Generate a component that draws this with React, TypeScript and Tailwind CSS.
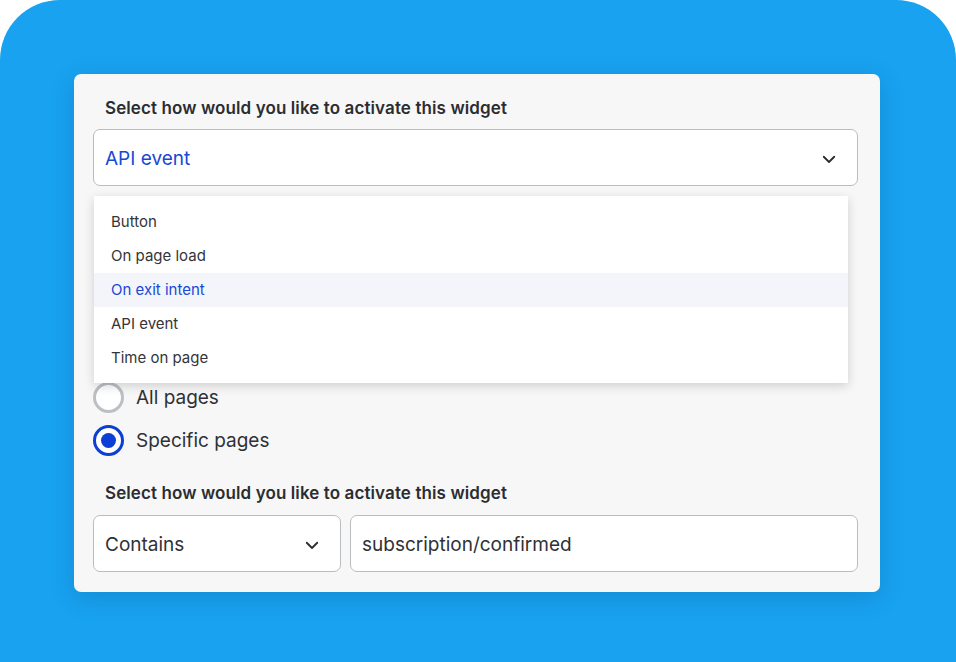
import React from "react";

const Chevron: React.FC<{ className?: string }> = ({ className }) => (
  <svg
    className={className}
    width="18"
    height="18"
    viewBox="0 0 24 24"
    fill="none"
    stroke="#2a2c30"
    strokeWidth="2.4"
    strokeLinecap="round"
    strokeLinejoin="round"
  >
    <path d="M5 9l7 7 7-7" />
  </svg>
);

const options = ["Button", "On page load", "On exit intent", "API event", "Time on page"];

const Radio: React.FC<{ checked?: boolean; label: string }> = ({ checked, label }) => (
  <div className="flex items-center gap-[12px]">
    {checked ? (
      <div className="flex h-[31px] w-[31px] items-center justify-center rounded-full border-[3px] border-[#0b3fd6] bg-white">
        <div className="h-[15px] w-[15px] rounded-full bg-[#0b3fd6]" />
      </div>
    ) : (
      <div className="h-[31px] w-[31px] rounded-full border-[3px] border-[#bcbfc4] bg-white" />
    )}
    <span className="pt-[2px] text-[19px] text-[#2f3135]">{label}</span>
  </div>
);

export default function App() {
  return (
    <div
      className="h-[662px] w-[956px] overflow-hidden bg-white"
      style={{ fontFamily: "Inter, 'Noto Sans', sans-serif" }}
    >
      <div className="h-full rounded-t-[60px] bg-[#18a2f0] px-[74px] pt-[74px]">
        <div className="relative w-[806px] rounded-[7px] bg-[#f7f7f7] pb-[20px] pl-[19px] pr-[22px] pt-[22px] shadow-[0_6px_24px_rgba(0,40,90,0.18)]">
          <div className="mb-[9px] px-[12px] text-[17px] font-semibold leading-6 tracking-[0.1px] text-[#2b2d31]">
            Select how would you like to activate this widget
          </div>
          <div className="flex h-[57px] items-center justify-between rounded-[7px] border border-[#b9bcc1] bg-white pl-[11px] pr-[19px] pt-[3px]">
            <span className="text-[19px] text-[#1848d4]">API event</span>
            <Chevron />
          </div>

          <div className="absolute left-[20px] top-[122px] z-10 w-[754px] bg-white pb-[8px] pt-[9px] shadow-[0_3px_10px_rgba(0,0,0,0.16)]">
            {options.map((o) => (
              <div
                key={o}
                className={
                  o === "On exit intent"
                    ? "flex h-[34px] items-center bg-[#f3f5fb] px-[17px] text-[15px] text-[#1848d4]"
                    : "flex h-[34px] items-center px-[17px] text-[15px] text-[#333539]"
                }
              >
                {o}
              </div>
            ))}
          </div>

          <div className="mt-[196px] flex flex-col gap-[12px]">
            <Radio label="All pages" />
            <Radio checked label="Specific pages" />
          </div>

          <div className="mb-[10px] mt-[25px] px-[12px] text-[17px] font-semibold leading-6 tracking-[0.1px] text-[#2b2d31]">
            Select how would you like to activate this widget
          </div>
          <div className="flex gap-[9px]">
            <div className="flex h-[57px] w-[248px] items-center justify-between rounded-[7px] border border-[#b9bcc1] bg-white pl-[11px] pr-[19px] pt-[3px]">
              <span className="text-[19px] text-[#2f3135]">Contains</span>
              <Chevron />
            </div>
            <div className="flex h-[57px] flex-1 items-center rounded-[7px] border border-[#b9bcc1] bg-white px-[11px] pt-[3px]">
              <span className="text-[19px] text-[#2f3135]">subscription/confirmed</span>
            </div>
          </div>
        </div>
      </div>
    </div>
  );
}
